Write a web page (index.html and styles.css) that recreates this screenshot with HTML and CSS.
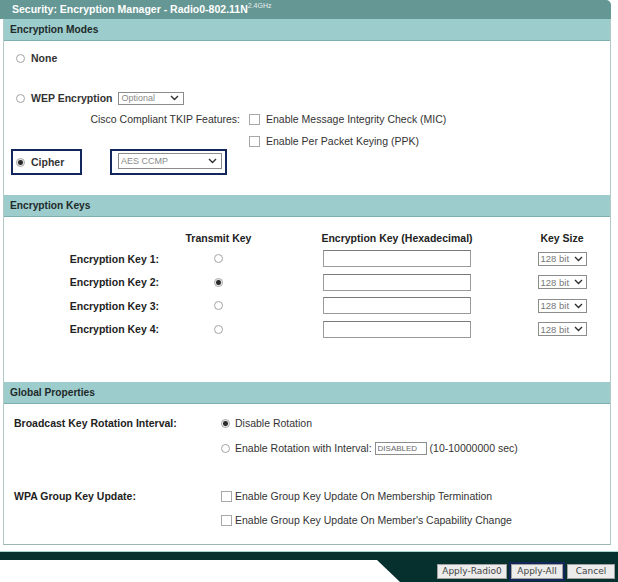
FILE: index.html
```html
<!DOCTYPE html>
<html lang="en">
<head>
    <meta charset="UTF-8">
    <meta name="viewport" content="width=device-width, initial-scale=1.0">
    <title>Security: Encryption Manager</title>
    <link rel="stylesheet" href="styles.css">
</head>
<body>
    <div class="panel">
        <div class="title-bar">Security: Encryption Manager - Radio0-802.11N<sup>2.4GHz</sup></div>
        <div class="frame">

            <div class="section-head">Encryption Modes</div>
            <div class="modes">
                <div class="mode-row none-row">
                    <label class="opt"><input type="radio" name="mode"><b>None</b></label>
                </div>
                <div class="mode-row wep-row">
                    <label class="opt"><input type="radio" name="mode"><b>WEP Encryption</b></label>
                    <select class="sel sel-wep"><option>Optional</option></select>
                </div>
                <div class="mode-row tkip-row">
                    <span class="tkip-label">Cisco Compliant TKIP Features:</span>
                    <label class="opt"><input type="checkbox">Enable Message Integrity Check (MIC)</label>
                </div>
                <div class="mode-row ppk-row">
                    <label class="opt"><input type="checkbox">Enable Per Packet Keying (PPK)</label>
                </div>
                <div class="cipher-row">
                    <label class="focus-box cipher-box opt"><input type="radio" name="mode" checked><b>Cipher</b></label>
                    <div class="focus-box cipher-select">
                        <select class="sel sel-cipher"><option>AES CCMP</option></select>
                    </div>
                </div>
            </div>

            <div class="section-head">Encryption Keys</div>
            <div class="keys">
                <div class="keys-grid">
                    <span></span>
                    <b class="col-head">Transmit Key</b>
                    <b class="col-head">Encryption Key (Hexadecimal)</b>
                    <b class="col-head">Key Size</b>

                    <b class="key-label">Encryption Key 1:</b>
                    <span class="cell"><input type="radio" name="tx"></span>
                    <span class="cell"><input type="text" class="key-input"></span>
                    <span class="cell"><select class="sel sel-size"><option>128 bit</option></select></span>

                    <b class="key-label">Encryption Key 2:</b>
                    <span class="cell"><input type="radio" name="tx" checked></span>
                    <span class="cell"><input type="text" class="key-input"></span>
                    <span class="cell"><select class="sel sel-size"><option>128 bit</option></select></span>

                    <b class="key-label">Encryption Key 3:</b>
                    <span class="cell"><input type="radio" name="tx"></span>
                    <span class="cell"><input type="text" class="key-input"></span>
                    <span class="cell"><select class="sel sel-size"><option>128 bit</option></select></span>

                    <b class="key-label">Encryption Key 4:</b>
                    <span class="cell"><input type="radio" name="tx"></span>
                    <span class="cell"><input type="text" class="key-input"></span>
                    <span class="cell"><select class="sel sel-size"><option>128 bit</option></select></span>
                </div>
            </div>

            <div class="section-head">Global Properties</div>
            <div class="props">
                <div class="prop-row">
                    <b class="prop-label">Broadcast Key Rotation Interval:</b>
                    <label class="opt"><input type="radio" name="rot" checked>Disable Rotation</label>
                </div>
                <div class="prop-row row-interval">
                    <span class="prop-label"></span>
                    <label class="opt"><input type="radio" name="rot">Enable Rotation with Interval:</label>
                    <input type="text" class="interval" value="DISABLED">
                    <span class="hint">(10-10000000 sec)</span>
                </div>
                <div class="prop-row row-wpa">
                    <b class="prop-label">WPA Group Key Update:</b>
                    <label class="opt"><input type="checkbox">Enable Group Key Update On Membership Termination</label>
                </div>
                <div class="prop-row row-cap">
                    <span class="prop-label"></span>
                    <label class="opt"><input type="checkbox">Enable Group Key Update On Member's Capability Change</label>
                </div>
            </div>

        </div>
    </div>

    <div class="footer">
        <div class="footer-bar"></div>
        <div class="footer-actions">
            <button class="btn btn-radio">Apply-Radio0</button>
            <span class="btn-focus"><button class="btn btn-all">Apply-All</button></span>
            <button class="btn btn-cancel">Cancel</button>
        </div>
    </div>
</body>
</html>
```

FILE: styles.css
```css
* {
    margin: 0;
    padding: 0;
    box-sizing: border-box;
}

body {
    font-family: 'Liberation Sans', Arial, sans-serif;
    font-size: 10.5px;
    color: #2a2a2a;
    background: white;
    width: 618px;
    overflow: hidden;
}

.panel {
    width: 611px;
}

.title-bar {
    height: 19px;
    line-height: 18px;
    padding-left: 12px;
    background: #659794;
    color: white;
    font-weight: bold;
    border-top-right-radius: 5px;
}

.title-bar sup {
    font-size: 7px;
    font-weight: normal;
    vertical-align: 5px;
    line-height: 0;
    opacity: 0.85;
}

.frame {
    margin-left: 3px;
    border-left: 1px solid #b3cac8;
    border-right: 1px solid #b3cac8;
    border-bottom: 1px solid #9fb5b3;
}

.section-head {
    height: 22px;
    line-height: 21px;
    padding-left: 6px;
    background: #9ccccb;
    border-bottom: 1px solid #7eaead;
    font-weight: bold;
    font-size: 10.2px;
    color: #1e2a2a;
}

/* controls */

input[type="radio"],
input[type="checkbox"] {
    appearance: none;
    -webkit-appearance: none;
    width: 9px;
    height: 9px;
    margin: 0;
    border: 1px solid #a3a3a3;
    background: white;
    flex: none;
}

input[type="radio"] {
    border-radius: 50%;
}

input[type="radio"]:checked {
    background: radial-gradient(circle, #2b2b2b 0 2px, #9a9a9a 2.6px, white 3.2px);
}

input[type="checkbox"] {
    width: 11px;
    height: 11px;
    border-color: #a8a8a8;
}

.opt {
    display: inline-flex;
    align-items: center;
    gap: 6px;
    white-space: nowrap;
    color: #333;
}

.sel {
    appearance: none;
    -webkit-appearance: none;
    font-family: 'Liberation Sans', Arial, sans-serif;
    font-size: 9px;
    color: #8a8a8a;
    background: white url("data:image/svg+xml,%3Csvg xmlns='http://www.w3.org/2000/svg' width='9' height='6'%3E%3Cpath d='M1 1l3.5 3.5L8 1' fill='none' stroke='%23303030' stroke-width='1.4'/%3E%3C/svg%3E") no-repeat right 4px center;
    border: 1px solid #8c8c8c;
    padding: 0 12px 0 2px;
    border-radius: 0;
}

/* encryption modes */

.modes {
    padding: 8px 0 20px;
}

.mode-row {
    display: flex;
    align-items: center;
    height: 18px;
    padding-left: 12px;
}

.wep-row {
    margin-top: 22px;
}

.sel-wep {
    width: 66px;
    height: 13px;
    margin-left: 6px;
    line-height: 11px;
}

.tkip-row,
.ppk-row {
    height: 16px;
}

.tkip-row {
    margin-top: 4px;
    padding-left: 0;
}

.tkip-label {
    width: 236px;
    text-align: right;
    margin-right: 9px;
    color: #333;
}

.ppk-row {
    margin-top: 6px;
    padding-left: 245px;
}

.cipher-row {
    display: flex;
    align-items: center;
    gap: 28px;
    padding-left: 7px;
}

.focus-box {
    border: 2px solid #14275c;
    height: 26px;
}

.cipher-box {
    width: 71px;
    padding-left: 3px;
}

.cipher-select {
    width: 117px;
    padding: 2px 0 0 6px;
}

.sel-cipher {
    width: 104px;
    height: 16px;
}

/* encryption keys */

.keys {
    padding: 12px 0 41px;
}

.keys-grid {
    display: grid;
    grid-template-columns: 155px 119px 238px 92px;
    grid-template-rows: 18px repeat(4, 23.5px);
    align-items: center;
}

.col-head {
    text-align: center;
    color: #222;
}

.key-label {
    text-align: right;
    color: #222;
}

.cell {
    display: flex;
    justify-content: center;
    align-items: center;
}

.key-input {
    width: 148px;
    height: 17px;
    border: 1px solid #9a9a9a;
    border-top-color: #7a7a7a;
    background: white;
}

.sel-size {
    width: 49px;
    height: 14px;
    font-size: 9.5px;
    color: #777;
    padding-right: 10px;
    background-position: right 3px center;
}

/* global properties */

.props {
    padding: 10px 0 15px;
}

.prop-row {
    display: flex;
    align-items: center;
    height: 18px;
}

.prop-label {
    width: 217px;
    padding-left: 10px;
    flex: none;
    color: #222;
}

.props .opt {
    gap: 5px;
}

.row-interval {
    margin-top: 7px;
}

.interval {
    width: 52px;
    height: 13px;
    margin-left: 3px;
    border: 1px solid #8c8c8c;
    font-family: 'Liberation Sans', Arial, sans-serif;
    font-size: 8px;
    color: #666;
    padding-left: 2px;
}

.hint {
    margin-left: 3px;
    color: #333;
}

.row-wpa {
    margin-top: 30px;
}

.row-cap {
    margin-top: 6px;
}

.props input[type="checkbox"] {
    margin-right: -2px;
}

/* footer */

.footer {
    margin-top: 6px;
    border-top: 1px solid #a7d6d2;
}

.footer-bar {
    height: 8px;
    background: #06302e;
}

.footer-actions {
    margin-left: 377px;
    height: 22px;
    background: #06302e;
    clip-path: polygon(0 0, 100% 0, 100% 100%, 23px 100%);
    display: flex;
    justify-content: flex-end;
    align-items: center;
    gap: 2px;
    padding-right: 3px;
}

.btn {
    height: 15px;
    font-family: 'DejaVu Sans', 'Liberation Sans', sans-serif;
    font-size: 9px;
    color: #444;
    background: #ececec;
    border: 1px solid #a0a0a0;
    border-radius: 0;
}

.btn-radio {
    width: 70px;
}

.btn-focus {
    display: flex;
    border: 2px solid #13265c;
}

.btn-all {
    width: 52px;
}

.btn-cancel {
    width: 48px;
}
```
